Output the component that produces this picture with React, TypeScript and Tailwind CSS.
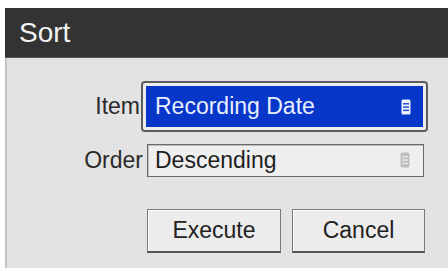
import React from 'react';

const ListIcon = ({ fill, line }: { fill: string; line: string }) => (
  <svg width="10" height="16" viewBox="0 0 10 16">
    <rect x="0.5" y="0.5" width="9" height="15" rx="1.5" fill={fill} />
    <rect x="2" y="4" width="6" height="1.5" fill={line} />
    <rect x="2" y="7.3" width="6" height="1.5" fill={line} />
    <rect x="2" y="10.6" width="6" height="1.5" fill={line} />
  </svg>
);

export default function App() {
  return (
    <div
      className="w-[448px] h-[268px] bg-white pt-[8px] pl-[5px] overflow-hidden"
      style={{ fontFamily: '"Liberation Sans", Arial, sans-serif' }}
    >
      <div className="flex flex-col h-full">
        {/* title bar */}
        <div className="h-[50px] bg-[#333333] text-[#f2f2f2] text-[28px] flex items-center pl-[14px] border-b border-[#555]">
          Sort
        </div>

        {/* body */}
        <div className="flex-1 bg-[#e3e3e3] border-l-2 border-[#c4c4c4] pt-[23px]">
          {/* Item */}
          <div className="flex items-center">
            <div className="w-[134px] text-right text-[23px] text-[#2a2a2a] pr-[1px]">Item</div>
            <div className="w-[287px] h-[51px] border-2 border-[#5c5c5c] rounded-[4px] p-[3px] bg-[#ededed]">
              <div className="h-full bg-[#0737c9] flex items-center justify-between pl-[9px] pr-[12px] text-[23px] text-[#e8efff]">
                <span>Recording Date</span>
                <ListIcon fill="#eef2ff" line="#2a4fd0" />
              </div>
            </div>
          </div>

          {/* Order */}
          <div className="flex items-center mt-[11px]">
            <div className="w-[136px] text-right text-[23px] text-[#2a2a2a]">Order</div>
            <div className="ml-[4px] w-[277px] h-[33px] border border-[#6a6a6a] bg-[#efefef] flex items-center justify-between pl-[7px] pr-[13px] text-[23px] text-[#1e1e1e] shadow-[inset_1px_1px_0_#bdbdbd]">
              <span>Descending</span>
              <ListIcon fill="#bdbdbd" line="#e6e6e6" />
            </div>
          </div>

          {/* buttons */}
          <div className="flex gap-[11px] ml-[140px] mt-[31px]">
            <button className="w-[134px] h-[44px] bg-[#ececec] border border-[#7a7a7a] border-b-2 border-b-[#555] text-[23px] text-[#222] shadow-[inset_1px_1px_0_#ffffff]">
              Execute
            </button>
            <button className="w-[133px] h-[44px] bg-[#ececec] border border-[#7a7a7a] border-b-2 border-b-[#555] text-[23px] text-[#222] shadow-[inset_1px_1px_0_#ffffff]">
              Cancel
            </button>
          </div>
        </div>
      </div>
    </div>
  );
}
